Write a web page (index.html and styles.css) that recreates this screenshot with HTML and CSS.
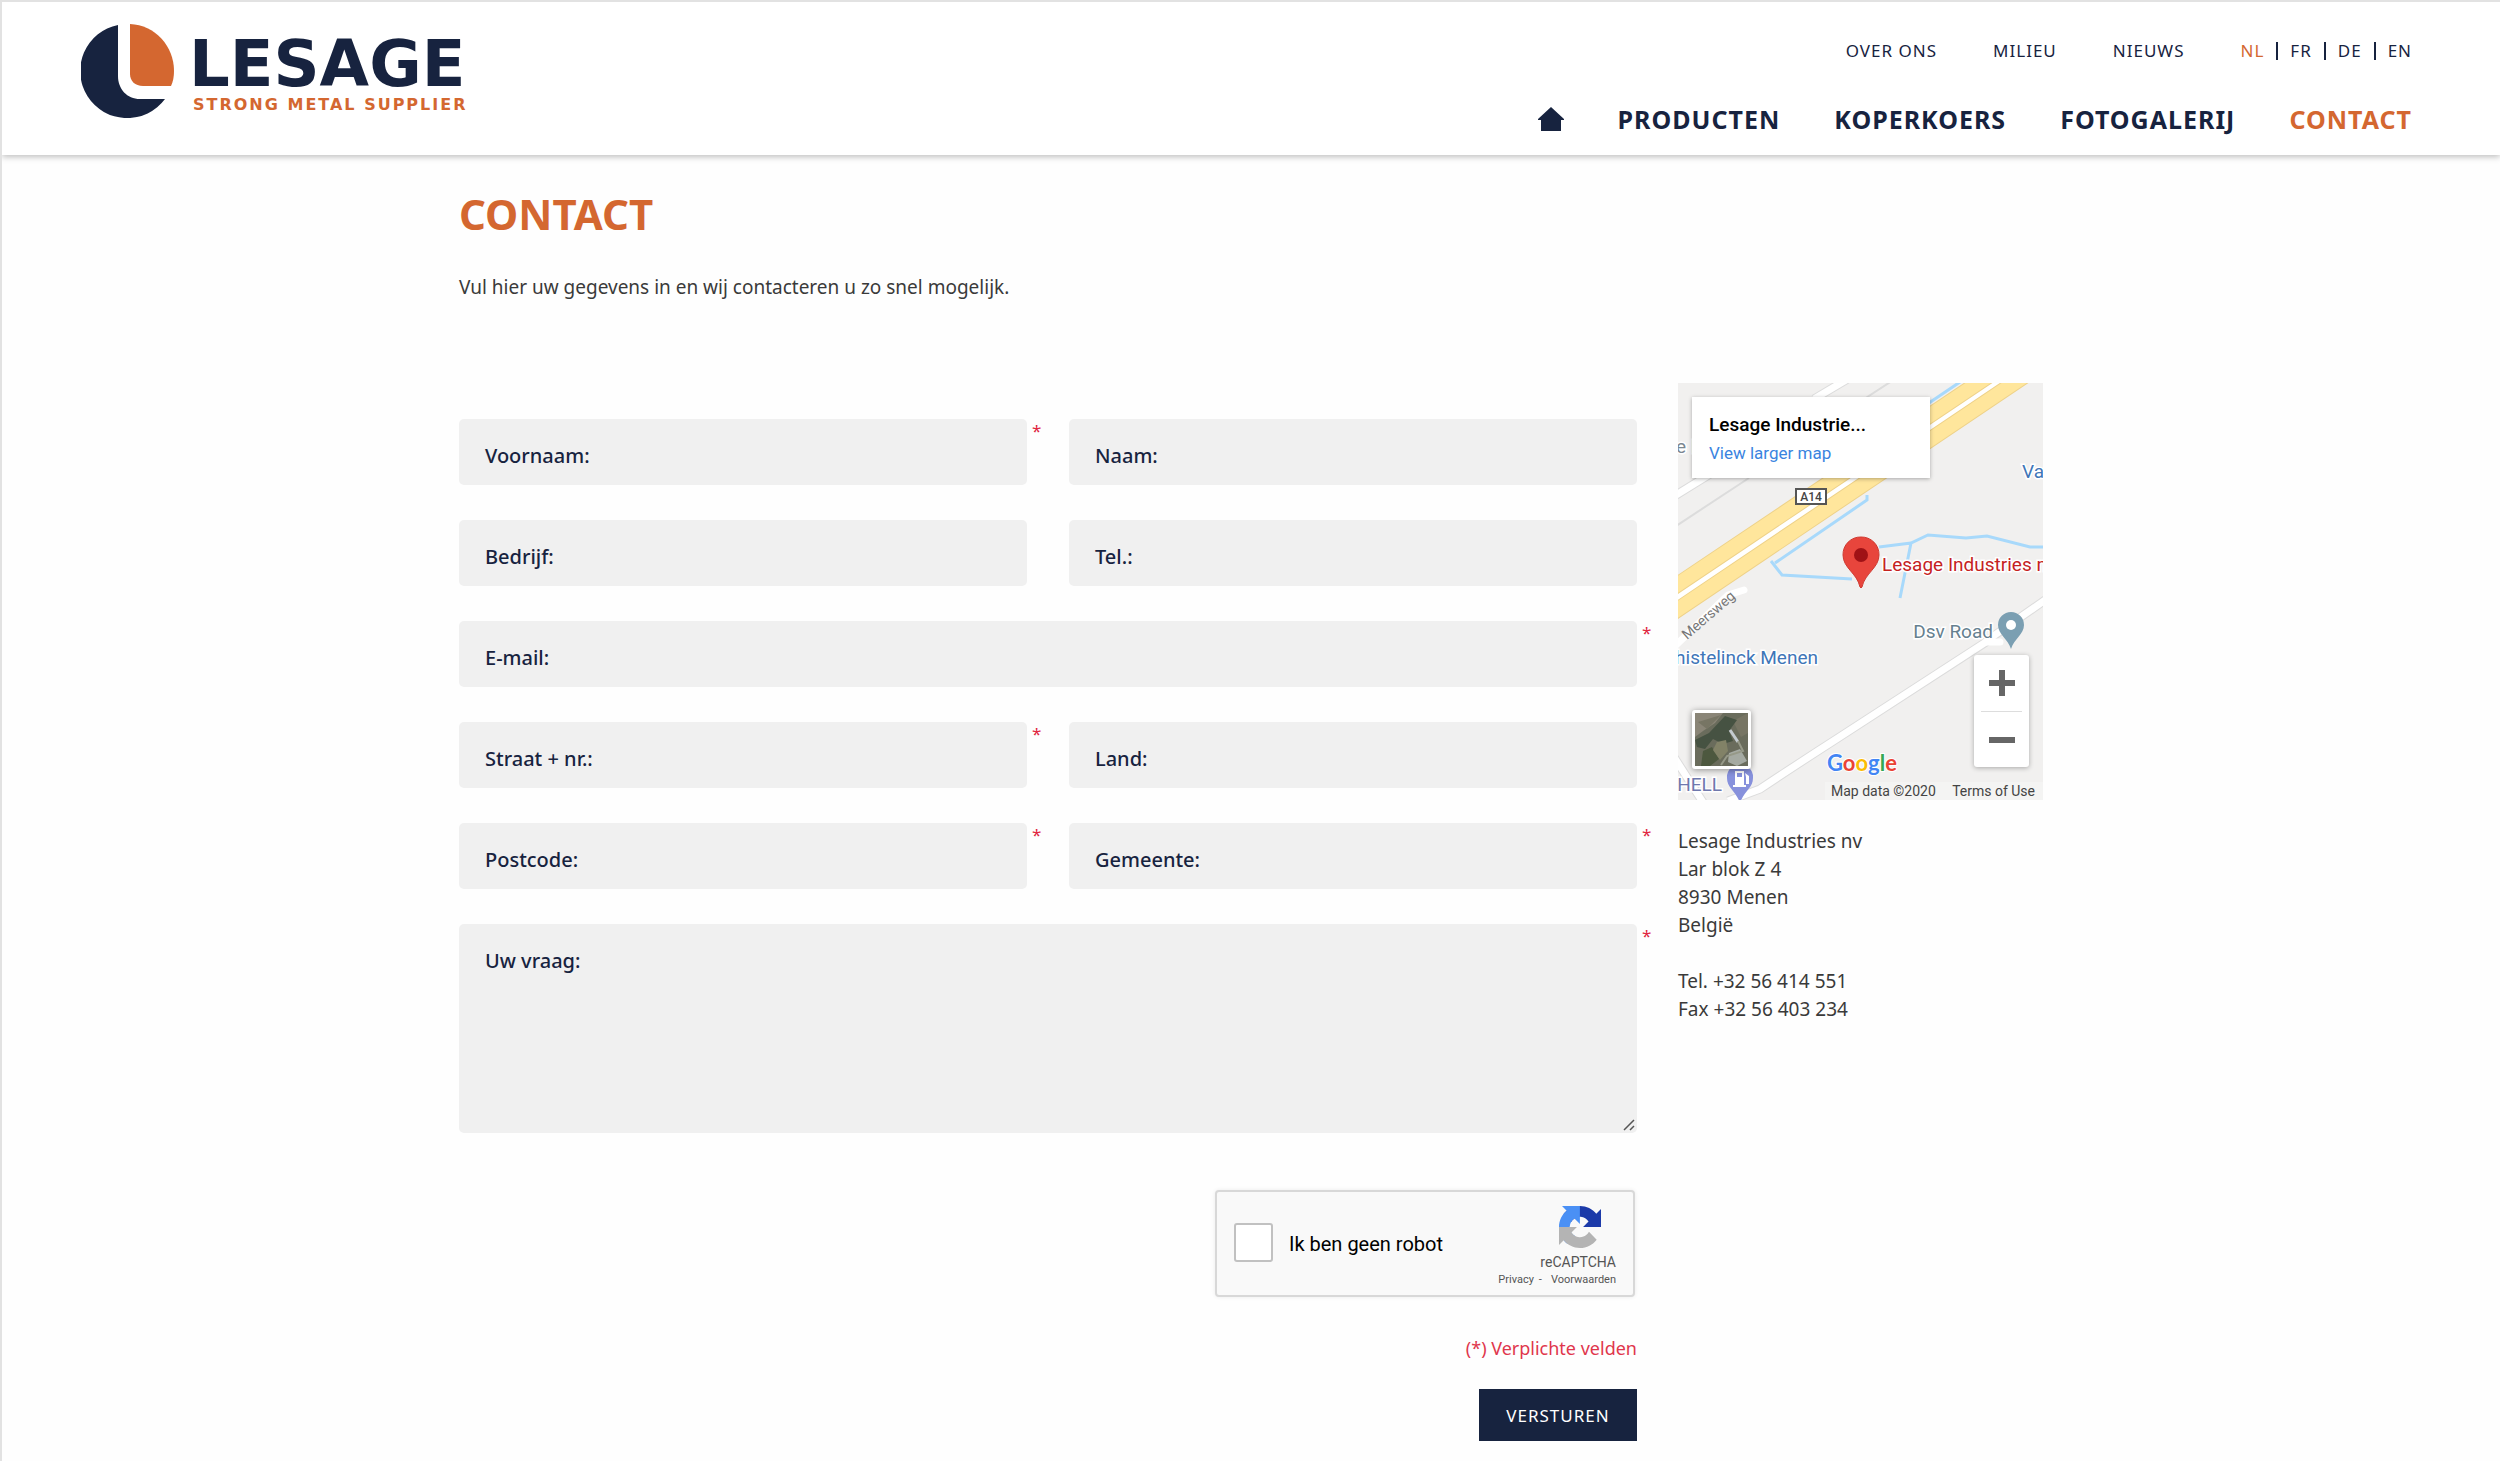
FILE: index.html
```html
<!DOCTYPE html>
<html lang="nl">
<head>
<meta charset="utf-8">
<title>Contact - Lesage</title>
<link rel="stylesheet" href="styles.css">
</head>
<body>
<header class="header">
  <a class="logo" href="#">
    <svg class="logo-mark" width="94" height="94" viewBox="0 0 94 94" aria-hidden="true">
      <path fill="#17233f" d="M37 1A47 47 0 1 0 84 75H59C46 75 37 65 37 52Z"/>
      <path fill="#d46730" d="M49 0C74 1 93 22 93 47C93 53 92 58 90 62H62C54 62 49 57 49 50Z"/>
    </svg>
    <span class="logo-text">
      <span class="logo-name">LESAGE</span>
      <span class="logo-tagline">STRONG METAL SUPPLIER</span>
    </span>
  </a>
  <div class="menus">
    <div class="top-menu">
      <nav class="top-links">
        <a href="#">OVER ONS</a>
        <a href="#">MILIEU</a>
        <a href="#">NIEUWS</a>
      </nav>
      <nav class="languages" aria-label="Taal">
        <a class="active" href="#">NL</a>
        <a href="#">FR</a>
        <a href="#">DE</a>
        <a href="#">EN</a>
      </nav>
    </div>
    <nav class="main-menu">
      <a class="home" href="#" aria-label="Home">
        <svg width="26" height="24" viewBox="0 0 26 24"><path fill="#17233f" d="M13 0L26 12V13H23V24H3V13H0V12Z"/></svg>
      </a>
      <a href="#">PRODUCTEN</a>
      <a href="#">KOPERKOERS</a>
      <a href="#">FOTOGALERIJ</a>
      <a class="active" href="#">CONTACT</a>
    </nav>
  </div>
</header>

<main class="page">
  <h1 class="title">CONTACT</h1>
  <p class="intro">Vul hier uw gegevens in en wij contacteren u zo snel mogelijk.</p>
  <div class="columns">
    <form class="form">
      <div class="fields">
        <div class="field required"><label for="voornaam">Voornaam:</label><input id="voornaam" type="text"></div>
        <div class="field"><label for="naam">Naam:</label><input id="naam" type="text"></div>
        <div class="field"><label for="bedrijf">Bedrijf:</label><input id="bedrijf" type="text"></div>
        <div class="field"><label for="tel">Tel.:</label><input id="tel" type="tel"></div>
        <div class="field wide required"><label for="email">E-mail:</label><input id="email" type="email"></div>
        <div class="field required"><label for="straat">Straat + nr.:</label><input id="straat" type="text"></div>
        <div class="field"><label for="land">Land:</label><input id="land" type="text"></div>
        <div class="field required"><label for="postcode">Postcode:</label><input id="postcode" type="text"></div>
        <div class="field required"><label for="gemeente">Gemeente:</label><input id="gemeente" type="text"></div>
        <div class="field wide required"><label for="vraag">Uw vraag:</label><textarea id="vraag"></textarea></div>
      </div>
      <div class="captcha">
        <input class="captcha-box" id="robot" type="checkbox">
        <label class="captcha-label" for="robot">Ik ben geen robot</label>
        <div class="captcha-brand">
          <svg width="42" height="42" viewBox="0 0 64 64" aria-hidden="true">
            <path fill="#1c3aa9" d="M64 31.955l-.033-1.37V4.687l-7.16 7.16C50.948 4.674 42.033.093 32.05.093c-10.4 0-19.622 4.96-25.458 12.64l11.736 11.86a15.55 15.55 0 0 1 4.754-5.334c2.05-1.6 4.952-2.906 8.968-2.906.485 0 .86.057 1.135.163 4.976.393 9.288 3.14 11.828 7.124l-8.307 8.307L64 31.953"/>
            <path fill="#4a90f5" d="M31.862.094l-1.37.033H4.594l7.16 7.16C4.58 13.147 0 22.06 0 32.046c0 10.4 4.96 19.622 12.64 25.458L24.5 45.768a15.55 15.55 0 0 1-5.334-4.754c-1.6-2.05-2.906-4.952-2.906-8.968 0-.485.057-.86.163-1.135.393-4.976 3.14-9.288 7.124-11.828l8.307 8.307L31.86.095"/>
            <path fill="#b4b4b4" d="M.001 32.045l.033 1.37v25.898l7.16-7.16c5.86 7.173 14.774 11.754 24.76 11.754 10.4 0 19.622-4.96 25.458-12.64l-11.736-11.86a15.55 15.55 0 0 1-4.754 5.334c-2.05 1.6-4.952 2.906-8.968 2.906-.485 0-.86-.057-1.135-.163-4.976-.393-9.288-3.14-11.828-7.124l8.307-8.307c-10.522.04-22.4.066-27.295-.005"/>
          </svg>
          <span class="captcha-name">reCAPTCHA</span>
          <span class="captcha-links"><a href="#">Privacy</a><span>-</span><a href="#">Voorwaarden</a></span>
        </div>
      </div>
      <p class="note">(*) Verplichte velden</p>
      <button class="submit" type="submit">VERSTUREN</button>
    </form>

    <aside class="side">
      <div class="map">
        <svg class="map-canvas" viewBox="0 0 365 417" preserveAspectRatio="xMidYMid slice">
          <rect width="365" height="417" fill="#f1f0ef"/>
          <g fill="none" stroke="#dcdcdc">
            <path stroke-width="9" d="M136 16L173 -6M-5 114L50 80"/>
            <path stroke-width="2" d="M180 20L220 -6M-2 143L71 95"/>
            <path stroke-width="9" d="M370 215L314 254L308 259L160 355Q118 382 82 406L50 418M-4 374L28 424"/>
          </g>
          <g fill="none" stroke="#fff" stroke-width="7">
            <path d="M136 16L173 -6M-5 114L50 80M370 215L314 254L308 259L160 355Q118 382 82 406L50 418M-4 374L28 424"/>
            <path stroke-linecap="round" d="M308 259H322M66 207L50 212L-4 264"/>
          </g>
          <g fill="none" stroke="#a8d9fb" stroke-width="3">
            <path d="M245 24L285 -3M189 112V117L97 180M93 178L104 192L174 196M201 164L233 160L250 152L288 155L309 153L352 164H366M233 160L222 215"/>
          </g>
          <g fill="none">
            <path stroke="#fff" stroke-width="10" d="M-10 220L330 -9"/>
            <path stroke="#eed28a" stroke-width="16" d="M-10 208L315 -10M-10 233L351 -10"/>
            <path stroke="#ffe69c" stroke-width="14" d="M-10 208L315 -10M-10 233L351 -10"/>
          </g>
          <path fill="#fff" stroke="#555" stroke-width="2" d="M118 106H148V121H118Z"/>
          <text class="map-road" x="133" y="118" text-anchor="middle" fill="#444">A14</text>
          <text class="map-street" transform="translate(9 257) rotate(-41)" fill="#777">Meersweg</text>
          <path fill="#e8453c" stroke="#d03b32" d="M183 154A17.500 17.500 0 0 0 165 172C165 185 179 190 182 204Q183 206 184 204C187 190 201 185 201 172A17.500 17.500 0 0 0 183 154Z"/>
          <circle cx="183" cy="172" r="7" fill="#a01216"/>
          <g class="map-place" stroke="#fff" stroke-width="3" paint-order="stroke">
            <text x="204" y="188" fill="#c5221f">Lesage Industries nv</text>
            <text x="315" y="255" text-anchor="end" fill="#66808f">Dsv Road</text>
            <text x="140" y="281" text-anchor="end" fill="#3f76b8">histelinck Menen</text>
            <text x="344" y="95" fill="#3f76b8">Va</text>
            <text x="-2" y="70" fill="#7b8791">e I</text>
            <text x="44" y="408" text-anchor="end" fill="#6f78ad">HELL</text>
          </g>
          <path fill="#7b9fb2" d="M333 229A13 13 0 0 0 320 242C320 251 330 256 333 266C336 256 346 251 346 242A13 13 0 0 0 333 229Z"/>
          <circle cx="333" cy="242" r="5" fill="#fff"/>
          <path fill="#8791dc" d="M62 381A13 13 0 0 0 49 395C49 405 58 408 62 420C66 408 75 405 75 395A13 13 0 0 0 62 381Z"/>
          <path fill="#fff" d="M57 388H66V403H57ZM55 402H68V404H55ZM67 390L71 393V401H68V394"/>
          <path fill="#8791dc" d="M59 390H64V394H59Z"/>
          <text class="map-google" x="149" y="388" stroke="#fff" stroke-width="2" paint-order="stroke"><tspan fill="#4285f4">G</tspan><tspan fill="#ea4335">o</tspan><tspan fill="#fbbc05">o</tspan><tspan fill="#4285f4">g</tspan><tspan fill="#34a853">l</tspan><tspan fill="#ea4335">e</tspan></text>
          <rect x="147" y="399" width="218" height="18" fill="#f5f5f5" opacity="0.700"/>
          <text class="map-legal" x="153" y="413" fill="#444">Map data ©2020</text>
          <text class="map-legal" x="357" y="413" text-anchor="end" fill="#444">Terms of Use</text>
        </svg>
        <div class="map-card">
          <strong>Lesage Industrie...</strong>
          <a href="#">View larger map</a>
        </div>
        <button class="map-satellite" type="button" aria-label="Satelliet">
          <svg width="53" height="53" viewBox="0 0 53 53">
            <rect width="53" height="53" fill="#6a6c5c"/>
            <path fill="#8a8577" d="M0 0H28L20 10L8 18L0 24Z"/>
            <path fill="#777564" d="M3 9L26 2L12 16ZM38 8L53 0V20L46 24Z"/>
            <path fill="#465242" d="M30 3L42 7L34 18L38 28L28 31L18 26L10 36L2 34L0 27L14 20Z"/>
            <path fill="#4d583f" d="M8 38L17 34L24 46L15 53H6Z"/>
            <path fill="#828267" d="M22 29L31 27L33 38L25 47L18 37Z"/>
            <path fill="#a5aaa2" d="M34 40L45 36L52 48L42 53L33 49Z"/>
            <path fill="none" stroke="#c4cbd0" stroke-width="3" d="M35 17L43 29"/>
            <path fill="none" stroke="#969988" stroke-width="2" d="M43 28L48 38L32 43L26 52"/>
          </svg>
        </button>
        <div class="map-zoom">
          <button type="button" aria-label="Inzoomen"><svg width="26" height="26" viewBox="0 0 26 26"><path fill="#666" d="M10 0H16V10H26V16H16V26H10V16H0V10H10Z"/></svg></button>
          <button type="button" aria-label="Uitzoomen"><svg width="26" height="26" viewBox="0 0 26 26"><path fill="#666" d="M0 10H26V16H0Z"/></svg></button>
        </div>
      </div>
      <address class="address">
        <p>Lesage Industries nv<br>Lar blok Z 4<br>8930 Menen<br>België</p>
        <p>Tel. +32 56 414 551<br>Fax +32 56 403 234</p>
      </address>
    </aside>
  </div>
</main>
</body>
</html>
```
FILE: styles.css
```css
* {
  box-sizing: border-box;
}

body {
  margin: 0;
  min-height: 100vh;
  border-top: 2px solid #e2e2e2;
  border-left: 2px solid #e2e2e2;
  background: #fefefe;
  color: #3a3a3a;
  font-family: "Noto Sans", "Open Sans", sans-serif;
  font-size: 19px;
  line-height: 28px;
}

a {
  color: inherit;
  text-decoration: none;
}

p {
  margin: 0;
}

.header {
  display: flex;
  justify-content: space-between;
  padding: 22px 88px 22px 79px;
  height: 153px;
  background: #fff;
  box-shadow: 0 2px 6px rgba(0, 0, 0, 0.25);
}

.logo {
  display: flex;
  align-items: flex-start;
  gap: 14px;
}

.logo-text {
  display: flex;
  flex-direction: column;
  padding-top: 8px;
  font-family: "DejaVu Sans", sans-serif;
  font-weight: 700;
}

.logo-name {
  color: #17233f;
  font-size: 64px;
  line-height: 64px;
}

.logo-tagline {
  padding-left: 4px;
  color: #d46730;
  font-size: 16px;
  line-height: 18px;
  letter-spacing: 2px;
}

.menus {
  display: flex;
  flex-direction: column;
  align-items: flex-end;
  gap: 40px;
  padding-top: 13px;
  color: #17233f;
}

.top-menu,
.top-links,
.main-menu {
  display: flex;
  align-items: center;
  gap: 56px;
}

.top-menu {
  font-size: 17px;
  line-height: 28px;
  letter-spacing: 1px;
}

.languages {
  display: flex;
  align-items: center;
}

.languages a {
  padding: 0 12px;
  border-left: 2px solid #17233f;
  line-height: 18px;
}

.languages a:first-child {
  padding-left: 0;
  border-left: 0;
}

.languages a:last-child {
  padding-right: 0;
}

.main-menu {
  gap: 54px;
  font-size: 25px;
  font-weight: 700;
  line-height: 28px;
  letter-spacing: 1px;
}

.home {
  display: flex;
}

.active {
  color: #d46730;
}

.page {
  max-width: 1584px;
  margin: 0 auto;
  padding: 34px 0 21px;
}

.title {
  margin: 0;
  color: #d46730;
  font-size: 42px;
  font-weight: 700;
  line-height: 50px;
}

.intro {
  padding: 34px 0 82px;
}

.columns {
  display: grid;
  grid-template-columns: 1fr 365px;
  gap: 41px;
  align-items: start;
}

.form {
  display: flex;
  flex-direction: column;
  align-items: flex-end;
  padding-top: 36px;
}

.fields {
  display: grid;
  grid-template-columns: 1fr 1fr;
  gap: 35px 42px;
  width: 100%;
}

.field {
  position: relative;
  display: grid;
}

.field.wide {
  grid-column: span 2;
}

.field label,
.field input,
.field textarea {
  grid-area: 1 / 1;
}

.field label {
  z-index: 1;
  justify-self: start;
  align-self: start;
  padding: 23px 26px 0;
  color: #17233f;
  font-size: 20px;
  font-weight: 500;
}

.field input,
.field textarea {
  width: 100%;
  height: 66px;
  margin: 0;
  padding: 0 26px;
  border: 0;
  border-radius: 5px;
  background: #f0f0f0;
  font: inherit;
}

.field textarea {
  height: 209px;
  padding-top: 56px;
  resize: both;
}

.field textarea::-webkit-resizer {
  background: url("data:image/svg+xml,%3Csvg xmlns='http://www.w3.org/2000/svg' width='15' height='15'%3E%3Cpath d='M2 12L12 2M8 12L12 8' stroke='%23555' stroke-width='1.500'/%3E%3C/svg%3E") no-repeat;
}

.required::after {
  content: "*";
  position: absolute;
  top: -2px;
  left: 100%;
  padding-left: 5px;
  color: #e0263f;
  font-size: 17px;
}

.captcha {
  display: flex;
  align-items: center;
  width: 420px;
  height: 107px;
  margin: 57px 2px 37px 0;
  padding: 0 17px;
  border: 2px solid #d8d8d8;
  border-radius: 4px;
  background: #f9f9f9;
  box-shadow: 0 0 4px rgba(0, 0, 0, 0.08);
  font-family: Roboto, sans-serif;
}

.captcha-box {
  appearance: none;
  width: 39px;
  height: 39px;
  margin: 0 0 2px;
  border: 2px solid #c1c1c1;
  border-radius: 3px;
  background: #fff;
}

.captcha-label {
  flex: 1;
  padding-left: 16px;
  color: #000;
  font-size: 20px;
}

.captcha-brand {
  display: flex;
  flex-direction: column;
  align-items: flex-end;
  padding-top: 8px;
  color: #555;
}

.captcha-brand svg {
  margin: 0 15px 5px 0;
}

.captcha-name {
  font-size: 14px;
  line-height: 18px;
}

.captcha-links {
  display: flex;
  gap: 5px;
  font-size: 11px;
  line-height: 18px;
}

.captcha-links a:last-child {
  padding-left: 4px;
}

.note {
  color: #e0364c;
  font-size: 18px;
}

.submit {
  width: 158px;
  height: 52px;
  margin-top: 27px;
  padding: 0;
  border: 0;
  background: #17233f;
  color: #fff;
  font-family: inherit;
  font-size: 17px;
  letter-spacing: 1px;
}

.map {
  position: relative;
  overflow: hidden;
  font-family: Roboto, sans-serif;
}

.map-canvas {
  display: block;
  width: 100%;
}

.map-place {
  font-size: 19px;
}

.map-road {
  font-size: 12px;
  font-weight: 500;
}

.map-street,
.map-legal {
  font-size: 14px;
}

.map-google {
  font-family: Lato, sans-serif;
  font-size: 22px;
  font-weight: 700;
}

.map-card {
  position: absolute;
  top: 14px;
  left: 14px;
  display: flex;
  flex-direction: column;
  width: 238px;
  height: 81px;
  padding: 14px 17px;
  background: #fff;
  box-shadow: 0 1px 4px rgba(0, 0, 0, 0.3);
}

.map-card strong {
  color: #000;
  font-size: 19px;
  font-weight: 500;
}

.map-card a {
  color: #3a84df;
  font-size: 17px;
}

.map-satellite {
  position: absolute;
  bottom: 31px;
  left: 14px;
  display: flex;
  padding: 0;
  border: 3px solid #fff;
  border-radius: 3px;
  background: #fff;
  box-shadow: 0 1px 6px rgba(0, 0, 0, 0.4);
}

.map-zoom {
  position: absolute;
  right: 14px;
  bottom: 33px;
  display: flex;
  flex-direction: column;
  width: 55px;
  padding: 0 7px;
  border-radius: 3px;
  background: #fff;
  box-shadow: 0 1px 5px rgba(0, 0, 0, 0.3);
}

.map-zoom button {
  display: flex;
  align-items: center;
  justify-content: center;
  height: 56px;
  padding: 0;
  border: 0;
  background: none;
}

.map-zoom button + button {
  border-top: 1px solid #ddd;
}

.address {
  display: grid;
  gap: 28px;
  padding-top: 27px;
  font-style: normal;
}
```
